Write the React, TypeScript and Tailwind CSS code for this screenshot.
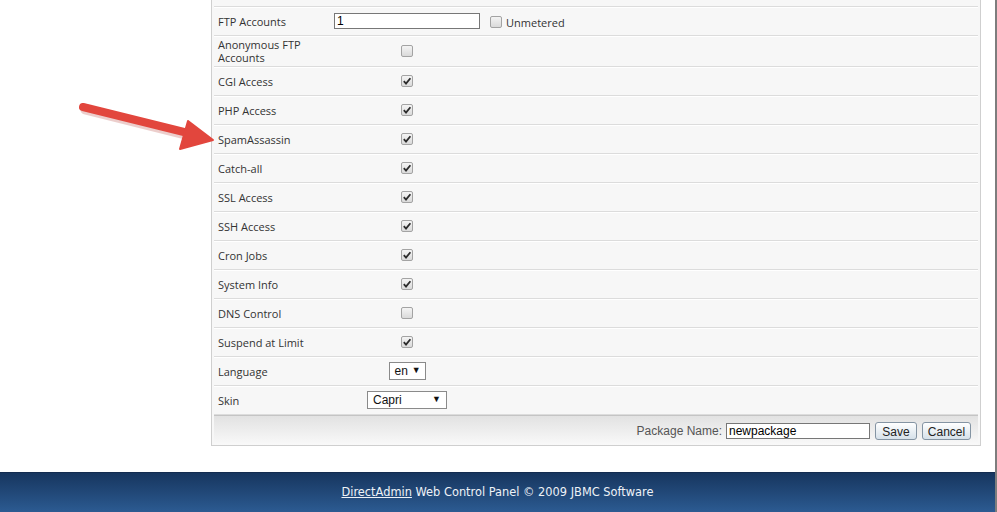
const rows: { label: string; checked?: boolean; kind?: "check" | "lang" | "skin" }[] = [
  { label: "CGI Access", checked: true },
  { label: "PHP Access", checked: true },
  { label: "SpamAssassin", checked: true },
  { label: "Catch-all", checked: true },
  { label: "SSL Access", checked: true },
  { label: "SSH Access", checked: true },
  { label: "Cron Jobs", checked: true },
  { label: "System Info", checked: true },
  { label: "DNS Control", checked: false },
  { label: "Suspend at Limit", checked: true },
  { label: "Language", kind: "lang" },
  { label: "Skin", kind: "skin" },
];

function Box({ checked }: { checked?: boolean }) {
  return (
    <span className="inline-flex w-[12px] h-[12px] items-center justify-center rounded-[2px] border border-[#a3a3a3] bg-gradient-to-b from-[#f4f4f4] to-[#dadada]">
      {checked && (
        <svg width="10" height="10" viewBox="0 0 10 10">
          <path d="M1.8 5.2 L4 7.6 L8.4 2.2" fill="none" stroke="#2b2b2b" strokeWidth="1.8" />
        </svg>
      )}
    </span>
  );
}

function Select({ text, w }: { text: string; w: string }) {
  return (
    <span
      className={`inline-flex h-[18px] items-center justify-between gap-[4px] border border-[#8a8a8a] bg-white pl-[5px] pr-[5px] text-[12px] text-[#111] ${w}`}
      style={{ fontFamily: "'Liberation Sans', Arial, sans-serif" }}
    >
      <span>{text}</span>
      <span className="text-[9px]">▼</span>
    </span>
  );
}

function Row({ label, children }: { label: string; children?: React.ReactNode }) {
  return (
    <div className="flex min-h-[29px] items-center border-b border-[#dcdcdc] shadow-[0_1px_0_#fff]">
      <div className="w-[120px] pl-[4px] py-[2px] leading-[13px]">{label}</div>
      {children}
    </div>
  );
}

export default function App() {
  return (
    <div
      className="relative flex w-[997px] h-[512px] overflow-hidden bg-white text-[11px] text-[#333]"
      style={{ fontFamily: "'Open Sans', sans-serif" }}
    >
      <div className="flex w-[995px] flex-col">
        <div className="pl-[211px]">
          <div className="-mt-[22px] w-[770px] border-x border-b border-[#cfcfcf] bg-[#f7f7f7] px-[2px]">
            <Row label="">
              <div className="w-[146px]">
                <div className="h-[16px] border border-[#777] bg-white" />
              </div>
            </Row>
            <Row label="FTP Accounts">
              <div className="w-[146px]">
                <div
                  className="h-[16px] border border-[#777] bg-white pl-[2px] text-[12px] leading-[14px] text-black"
                  style={{ fontFamily: "'Liberation Sans', Arial, sans-serif" }}
                >
                  1
                </div>
              </div>
              <div className="flex items-center gap-[4px] pl-[10px] pt-[2px]">
                <Box />
                <span className="mt-[2px]">Unmetered</span>
              </div>
            </Row>
            <Row label="Anonymous FTP Accounts">
              <div className="flex w-[146px] justify-center">
                <Box />
              </div>
            </Row>
            {rows.map((r) => (
              <Row key={r.label} label={r.label}>
                <div className="flex w-[146px] justify-center">
                  {r.kind === "lang" ? (
                    <Select text="en" w="w-[37px]" />
                  ) : r.kind === "skin" ? (
                    <Select text="Capri" w="w-[80px]" />
                  ) : (
                    <Box checked={r.checked} />
                  )}
                </div>
              </Row>
            ))}
            <div
              className="flex h-[30px] items-center justify-end gap-[5px] border-t border-[#c4c4c4] bg-gradient-to-b from-[#e2e2e2] to-[#f9f9f9] pr-[7px] text-[12px]"
              style={{ fontFamily: "'Liberation Sans', Arial, sans-serif" }}
            >
              <span className="mr-[-1px] text-[#555]">Package Name:</span>
              <div className="h-[16px] w-[144px] border border-[#777] bg-white pl-[2px] leading-[14px] text-black">
                newpackage
              </div>
              <button className="h-[18px] w-[42px] rounded-[3px] border border-[#8494a3] bg-gradient-to-b from-white to-[#d6e1ea] text-[#222]">
                Save
              </button>
              <button className="h-[18px] w-[49px] rounded-[3px] border border-[#8494a3] bg-gradient-to-b from-white to-[#d6e1ea] text-[#222]">
                Cancel
              </button>
            </div>
          </div>
        </div>
        <div className="h-[26px] shrink-0" />
        <div
          className="flex h-[40px] shrink-0 items-center justify-center border-t border-[#132c50] bg-gradient-to-b from-[#17365f] to-[#2c5b92] text-[11.4px] text-[#eef2f7]"
          style={{ fontFamily: "'DejaVu Sans', sans-serif" }}
        >
          <span>
            <span className="underline">DirectAdmin</span> Web Control Panel © 2009 JBMC Software
          </span>
        </div>
      </div>
      <div className="w-[2px] bg-[#7d7d7d]" />
      <svg className="absolute left-0 top-0" width="240" height="170">
        <line x1="84" y1="108" x2="188" y2="134" stroke="#b23a33" strokeOpacity="0.25" strokeWidth="9" strokeLinecap="round" transform="translate(1,2)" />
        <line x1="83" y1="107" x2="188" y2="133" stroke="#e2463d" strokeWidth="8" strokeLinecap="round" />
        <polygon points="188,121 213,140 180,149" fill="#e2463d" stroke="#e2463d" strokeWidth="2" strokeLinejoin="round" />
      </svg>
    </div>
  );
}
